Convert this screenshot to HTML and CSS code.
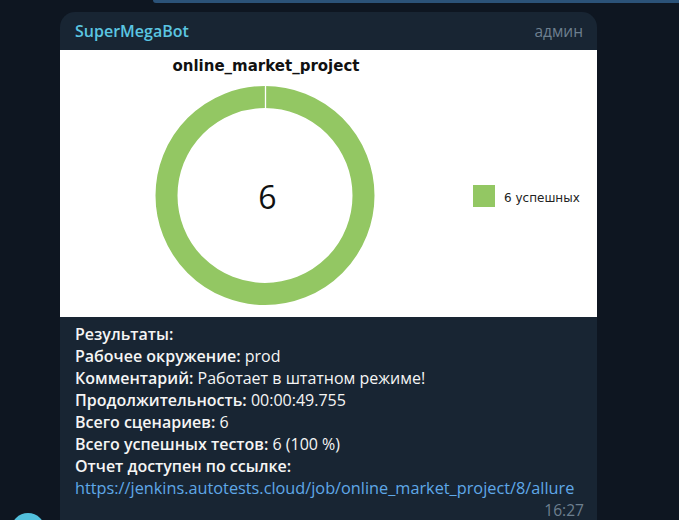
FILE: index.html
```html
<!DOCTYPE html>
<html lang="ru">
<head>
<meta charset="utf-8">
<title>SuperMegaBot</title>
<link rel="stylesheet" href="styles.css">
</head>
<body>
<div class="page">
  <div class="prev-out"></div>
  <div class="group">
    <div class="avatar-col"><div class="avatar"></div></div>
    <div class="bubble">
      <div class="head">
        <span class="name">SuperMegaBot</span>
        <span class="role">админ</span>
      </div>
      <div class="chart">
        <svg width="537" height="267" viewBox="0 0 537 267">
          <text class="c-title" x="206" y="21" text-anchor="middle">online_market_project</text>
          <circle cx="205" cy="145.5" r="98.5" fill="none" stroke="#93c763" stroke-width="22"/>
          <line x1="205.5" y1="35" x2="205.5" y2="58" stroke="#ffffff" stroke-width="1.3"/>
          <text class="c-num" x="207.5" y="159" text-anchor="middle">6</text>
          <rect x="413" y="135" width="22" height="22" fill="#93c763"/>
          <text class="c-legend" x="444" y="152">6 успешных</text>
        </svg>
      </div>
      <div class="text">
        <div class="line"><b>Результаты:</b></div>
        <div class="line"><b>Рабочее окружение:</b> prod</div>
        <div class="line"><b>Комментарий:</b> Работает в штатном режиме!</div>
        <div class="line"><b>Продолжительность:</b> 00:00:49.755</div>
        <div class="line"><b>Всего сценариев:</b> 6</div>
        <div class="line"><b>Всего успешных тестов:</b> 6 (100 %)</div>
        <div class="line"><b>Отчет доступен по ссылке:</b></div>
        <div class="line"><a class="link" href="#">https://jenkins.autotests.cloud/job/online_market_project/8/allure</a></div>
        <div class="time">16:27</div>
      </div>
    </div>
  </div>
</div>
</body>
</html>
```

FILE: styles.css
```css
html, body {
  margin: 0;
  padding: 0;
  background: #0e1621;
}
body {
  width: 679px;
  height: 520px;
  overflow: hidden;
  font-family: "Open Sans", "Liberation Sans", sans-serif;
}
.page {
  display: flex;
  flex-direction: column;
}
.prev-out {
  margin-left: 153px;
  height: 3px;
  background: #2b5278;
  border-bottom-left-radius: 4px;
}
.group {
  display: flex;
  align-items: flex-end;
  margin-top: 9px;
}
.avatar-col {
  width: 60px;
  display: flex;
  justify-content: flex-start;
}
.avatar {
  width: 34px;
  height: 34px;
  border-radius: 50%;
  background: #52c0dd;
  margin-left: 11px;
}
.bubble {
  width: 537px;
  background: #182533;
  border-radius: 15px 15px 15px 0;
  overflow: hidden;
}
.head {
  display: flex;
  justify-content: space-between;
  align-items: center;
  height: 38px;
  padding: 0 14px 0 15px;
  font-size: 16px;
}
.name {
  color: #5bc6e2;
  font-weight: 600;
}
.role {
  color: #6d7f8f;
  font-size: 15.5px;
}
.chart {
  background: #ffffff;
  height: 267px;
}
.chart svg {
  display: block;
}
.c-title {
  font-family: "DejaVu Sans", sans-serif;
  font-weight: bold;
  font-size: 15px;
  fill: #111111;
}
.c-num {
  font-family: "Open Sans", sans-serif;
  font-size: 32px;
  fill: #111111;
}
.c-legend {
  font-family: "DejaVu Sans", sans-serif;
  font-size: 12px;
  fill: #222222;
}
.text {
  padding: 6px 13px 26px 15px;
  color: #f5f5f5;
  font-size: 16px;
}
.line {
  line-height: 22px;
  white-space: nowrap;
}
.line b {
  font-weight: 600;
}
.link {
  color: #5fa8e8;
  text-decoration: none;
  font-size: 16.3px;
}
.time {
  text-align: right;
  color: #6d7f8f;
  font-size: 15.6px;
  line-height: 22px;
}
```
